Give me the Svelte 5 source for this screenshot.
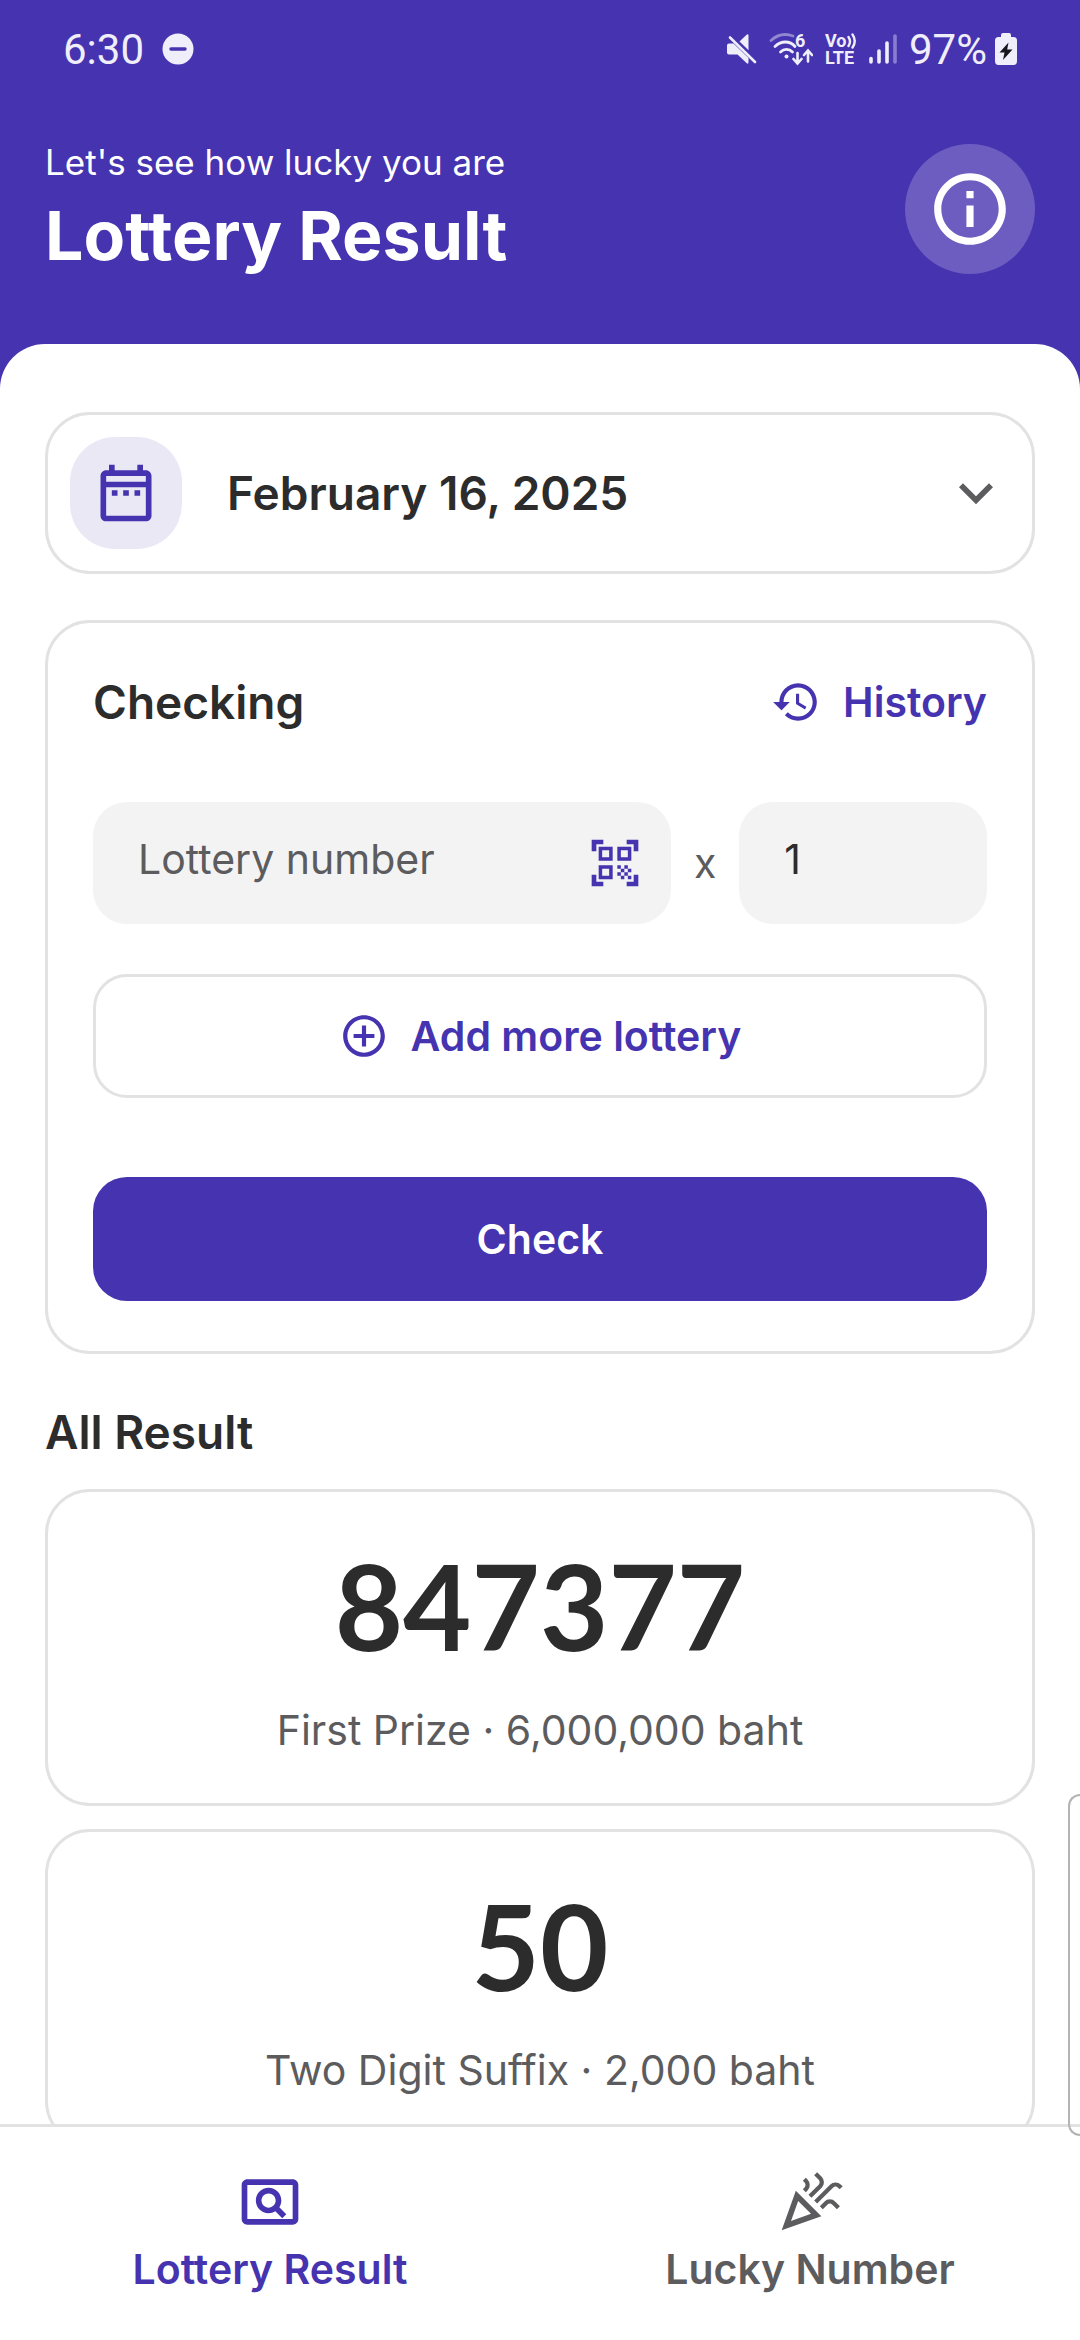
<script lang="ts">
	type Prize = { number: string, label: string, reward: string };
	type Tab = { id: string, label: string, icon: string };

	const icons: Record<string, string> =
	{
		info: "M11 7h2v2h-2zm0 4h2v6h-2zm1-9C6.48 2 2 6.48 2 12s4.48 10 10 10 10-4.48 10-10S17.52 2 12 2zm0 18c-4.41 0-8-3.59-8-8s3.59-8 8-8 8 3.59 8 8-3.59 8-8 8z",
		calendar: "M7 11h2v2H7v-2zm14-5v14c0 1.1-.9 2-2 2H5c-1.11 0-2-.9-2-2l.01-14c0-1.1.88-2 1.99-2h1V2h2v2h8V2h2v2h1c1.1 0 2 .9 2 2zM5 8h14V6H5v2zm14 12V10H5v10h14zm-4-7h2v-2h-2v2zm-4 0h2v-2h-2v2z",
		chevron: "M16.59 8.59 12 13.17 7.41 8.59 6 10l6 6 6-6z",
		history: "M13 3c-4.97 0-9 4.03-9 9H1l3.89 3.89.07.14L9 12H6c0-3.87 3.13-7 7-7s7 3.13 7 7-3.13 7-7 7c-1.93 0-3.68-.79-4.94-2.06l-1.42 1.42C8.27 19.99 10.51 21 13 21c4.97 0 9-4.03 9-9s-4.03-9-9-9zm-1 5v5l4.28 2.54.72-1.21-3.5-2.08V8H12z",
		scanner: "M9.5 6.5v3h-3v-3h3M11 5H5v6h6V5zm-1.5 9.5v3h-3v-3h3M11 13H5v6h6v-6zm6.5-6.5v3h-3v-3h3M19 5h-6v6h6V5zm-6 8h1.5v1.5H13V13zm1.5 1.5H16V16h-1.5v-1.5zM16 13h1.5v1.5H16V13zm-3 3h1.5v1.5H13V16zm1.5 1.5H16V19h-1.5v-1.5zM16 16h1.5v1.5H16V16zm1.5-1.5H19V16h-1.5v-1.5zm0 3H19V19h-1.5v-1.5zM22 7h-2V4h-3V2h5v5zm0 15v-5h-2v3h-3v2h5zM2 22h5v-2H4v-3H2v5zM2 2v5h2V4h3V2H2z",
		add: "M13 7h-2v4H7v2h4v4h2v-4h4v-2h-4V7zm-1-5C6.48 2 2 6.48 2 12s4.48 10 10 10 10-4.48 10-10S17.52 2 12 2zm0 18c-4.41 0-8-3.59-8-8s3.59-8 8-8 8 3.59 8 8-3.59 8-8 8z",
		pageview: "M11.49 16c.88 0 1.7-.26 2.39-.7l2.44 2.44 1.42-1.42-2.44-2.43c.44-.7.7-1.51.7-2.39C16 9.01 13.99 7 11.5 7S7 9.01 7 11.5 9.01 16 11.49 16zm.01-7C12.88 9 14 10.12 14 11.5S12.88 14 11.5 14 9 12.88 9 11.5 10.12 9 11.5 9zM20 4H4c-1.1 0-2 .9-2 2v12c0 1.1.9 2 2 2h16c1.1 0 2-.9 2-2V6c0-1.1-.9-2-2-2zm0 14H4V6h16v12z",
		celebration: "M2 22l14-5-9-9L2 22zm10.35-5.82L5.3 18.7l2.52-7.05 4.53 4.53zM14.53 12.53l5.59-5.59a1.25 1.25 0 0 1 1.77 0l.59.59 1.06-1.06-.59-.59a2.758 2.758 0 0 0-3.89 0l-5.59 5.59 1.06 1.06zM10.06 6.88l-.59.59 1.06 1.06.59-.59a2.758 2.758 0 0 0 0-3.89l-.59-.59-1.06 1.07.59.59c.48.48.48 1.28 0 1.76zM17.06 11.88l-1.59 1.59 1.06 1.06 1.59-1.59a1.25 1.25 0 0 1 1.77 0l1.61 1.61 1.06-1.06-1.61-1.61a2.758 2.758 0 0 0-3.9 0zM15.06 5.88l-3.59 3.59 1.06 1.06 3.59-3.59a2.758 2.758 0 0 0 0-3.89l-1.59-1.59-1.06 1.06 1.59 1.59c.48.49.48 1.29 0 1.77z"
	};

	const draws = ["February 16, 2025"];

	const prizes: Prize[] =
	[
		{ number: "847377", label: "First Prize", reward: "6,000,000 baht" },
		{ number: "50", label: "Two Digit Suffix", reward: "2,000 baht" }
	];

	const tabs: Tab[] =
	[
		{ id: "result", label: "Lottery Result", icon: "pageview" },
		{ id: "lucky", label: "Lucky Number", icon: "celebration" }
	];

	let draw = $state(draws[0]);
	let tickets = $state([{ number: "", amount: "1" }]);
	let activeTab = $state("result");

	function addTicket()
	{
		tickets.push({ number: "", amount: "1" });
	}
</script>

{#snippet icon(name: string, size: string)}
	<svg class="icon {size}" viewBox="0 0 24 24" aria-hidden="true"><path d={icons[name]} /></svg>
{/snippet}

<div class="app">
	<header>
		<div class="statusbar">
			<span>6:30</span>
			<svg class="dnd" width="32" height="32" viewBox="0 0 32 32" aria-hidden="true">
				<circle cx="16" cy="16" r="15.5" fill="currentColor" />
				<path d="M9 16h14" stroke="#4533b0" stroke-width="3.4" stroke-linecap="round" />
			</svg>
			<div class="system">
				<svg width="30" height="30" viewBox="0 0 30 30" aria-hidden="true">
					<path d="M12.5 7.5 19.6.8q1.9-1.4 1.9.8v14.6zM2 9.5h4.5L21.5 24v4q0 2.8-2 1L10.5 20.5H2q-2 0-2-2v-7q0-2 2-2z" fill="currentColor" />
					<path d="M3 3.5 28 28" stroke="currentColor" stroke-width="2.6" stroke-linecap="round" />
				</svg>
				<svg width="44" height="40" viewBox="0 -4 44 40" fill="none" stroke="currentColor" stroke-linecap="round" stroke-width="2.8" aria-hidden="true">
					<path d="M2 7.5C9 1 17 .5 24 3" opacity=".45" />
					<path d="M6 13.5c6-6 15-6 20 0M11.5 19c3.5-3.5 8.5-3.5 12 0" />
					<circle cx="17.5" cy="23.5" r="2" fill="currentColor" stroke="none" />
					<path d="M28.5 20v10m-4-4 4 4.5 4-4.5M39 28.5V18m-4 4 4-4.5 4 4.5" stroke-width="2.6" />
					<text x="26" y="14" class="glyph">6</text>
				</svg>
				<svg width="32" height="40" viewBox="0 -4 32 40" aria-hidden="true">
					<text x="0" y="14" class="glyph">Vo</text>
					<text x="0" y="31" class="glyph">LTE</text>
					<path d="M23.5 4q3 4.5 0 9M27.5 1.5q4.5 6.5 0 13" fill="none" stroke="currentColor" stroke-width="2.4" stroke-linecap="round" />
				</svg>
				<svg width="28" height="30" viewBox="0 0 28 30" stroke="currentColor" stroke-width="3.6" stroke-linecap="round" aria-hidden="true">
					<path d="M2 24.5V28M10 17v11M18 9v19" />
					<path d="M26 2v26" opacity=".4" />
				</svg>
				<div class="battery">
					<span>97%</span>
					<svg width="22" height="32" viewBox="0 0 22 32" aria-hidden="true">
						<path d="M6 4V2q0-2 2-2h6q2 0 2 2v2h2.5Q22 4 22 7.5V28q0 4-3.5 4h-15Q0 32 0 28V7.5Q0 4 3.5 4z" fill="currentColor" />
						<path d="M13.5 9.5 4.5 19.5h5L8 27l9.5-10.5h-5.300z" fill="#17161f" />
					</svg>
				</div>
			</div>
		</div>
		<div class="heading">
			<div>
				<p>Let's see how lucky you are</p>
				<h1>Lottery Result</h1>
			</div>
			<button class="info" aria-label="Info">{@render icon("info", "xl")}</button>
		</div>
	</header>

	<main>
		<div class="card date">
			<div class="tile">{@render icon("calendar", "lg")}</div>
			<select bind:value={draw} aria-label="Date">
				{#each draws as d}<option value={d}>{d}</option>{/each}
			</select>
			<span class="chevron">{@render icon("chevron", "lg")}</span>
		</div>

		<section class="card checking">
			<div class="title">
				<h2>Checking</h2>
				<button class="history">{@render icon("history", "sm")}History</button>
			</div>
			{#each tickets as ticket}
				<div class="ticket">
					<div class="field">
						<input bind:value={ticket.number} placeholder="Lottery number" aria-label="Lottery number" inputmode="numeric" />
						<button class="scan" aria-label="Scan">{@render icon("scanner", "md")}</button>
					</div>
					<span class="times">x</span>
					<div class="field">
						<input bind:value={ticket.amount} aria-label="Amount" inputmode="numeric" />
					</div>
				</div>
			{/each}
			<button class="wide outline" onclick={addTicket}>{@render icon("add", "sm")}Add more lottery</button>
			<button class="wide check">Check</button>
		</section>

		<h2 class="all">All Result</h2>
		<div class="prizes">
			{#each prizes as prize}
				<article class="card prize">
					<strong>{prize.number}</strong>
					<p>{prize.label} · {prize.reward}</p>
				</article>
			{/each}
		</div>
	</main>

	<nav>
		{#each tabs as tab}
			<button class:active={activeTab === tab.id} onclick={() => activeTab = tab.id}>
				{@render icon(tab.icon, "lg")}
				{tab.label}
			</button>
		{/each}
	</nav>
	<div class="edge"></div>
</div>

<style>
	.app
	{
		--primary: #4533b0;
		--ink: #2c2c2c;
		--muted: #5c5c5e;
		--line: #e2e2e2;
		position: relative;
		display: flex;
		flex-direction: column;
		height: 100vh;
		overflow: hidden;
		background: var(--primary);
		color: var(--ink);
		font-family: Inter, "Open Sans", sans-serif;
		font-size: 41px;
	}

	h1, h2, p
	{
		margin: 0;
	}

	button, input, select
	{
		font: inherit;
		color: inherit;
		border: none;
		background: none;
		padding: 0;
		margin: 0;
		outline: none;
	}

	button
	{
		display: flex;
		align-items: center;
		justify-content: center;
		cursor: pointer;
	}

	svg
	{
		display: block;
		flex: none;
	}

	.icon
	{
		fill: currentColor;
	}

	.sm
	{
		width: 50px;
		height: 50px;
	}

	.md
	{
		width: 56px;
		height: 56px;
	}

	.lg
	{
		width: 68px;
		height: 68px;
	}

	.xl
	{
		width: 86px;
		height: 86px;
	}

	.statusbar
	{
		display: flex;
		align-items: center;
		height: 98px;
		padding: 0 63px;
		color: #f0eefb;
		font-family: Roboto, sans-serif;
		font-size: 42px;
	}

	.dnd
	{
		margin-left: 18px;
	}

	.system
	{
		display: flex;
		align-items: center;
		gap: 12px;
		margin-left: auto;
	}

	.battery
	{
		display: flex;
		align-items: center;
		gap: 8px;
	}

	.glyph
	{
		font-size: 18px;
		font-weight: bold;
		fill: currentColor;
		stroke: none;
	}

	.heading
	{
		display: flex;
		align-items: center;
		justify-content: space-between;
		padding: 38px 45px 62px;
		color: white;
	}

	.heading p
	{
		font-size: 35px;
		line-height: 52px;
	}

	h1
	{
		font-size: 68px;
		line-height: 94px;
	}

	.info
	{
		width: 130px;
		height: 130px;
		border-radius: 50%;
		background: #6d5dc1;
	}

	main
	{
		flex: 1;
		min-height: 0;
		overflow-y: auto;
		scrollbar-width: none;
		padding: 68px 45px 0;
		border-radius: 45px 45px 0 0;
		background: white;
	}

	.card
	{
		border: solid 3px var(--line);
		border-radius: 45px;
	}

	.date
	{
		display: flex;
		align-items: center;
		padding: 22px;
		margin-bottom: 46px;
	}

	.tile
	{
		padding: 22px;
		border-radius: 45px;
		background: #ebe8f6;
		color: var(--primary);
	}

	select
	{
		flex: 1;
		appearance: none;
		margin-left: 45px;
		height: 68px;
		font-size: 46px;
		font-weight: 600;
	}

	.chevron
	{
		color: var(--muted);
	}

	.checking
	{
		padding: 45px 45px 50px;
	}

	.title
	{
		display: flex;
		align-items: center;
		justify-content: space-between;
		margin-bottom: 66px;
	}

	h2
	{
		font-size: 46px;
		line-height: 68px;
		font-weight: 600;
	}

	.history
	{
		gap: 22px;
		color: var(--primary);
		font-weight: 600;
	}

	.ticket
	{
		display: grid;
		grid-template-columns: minmax(0, 7fr) auto minmax(0, 3fr);
		align-items: center;
		gap: 23px;
		margin-bottom: 50px;
	}

	.field
	{
		display: flex;
		align-items: center;
		height: 122px;
		padding: 0 28px 0 45px;
		border-radius: 34px;
		background: #f3f3f3;
		box-sizing: border-box;
	}

	.field input
	{
		flex: 1;
		min-width: 0;
		width: 100%;
		padding-bottom: 8px;
	}

	.field input::placeholder
	{
		color: var(--muted);
		opacity: 1;
	}

	.scan
	{
		color: var(--primary);
	}

	.times
	{
		color: var(--muted);
	}

	.wide
	{
		width: 100%;
		height: 124px;
		gap: 22px;
		border-radius: 34px;
		font-weight: 600;
	}

	.outline
	{
		border: solid 3px var(--line);
		color: var(--primary);
	}

	.check
	{
		margin-top: 79px;
		background: var(--primary);
		color: white;
	}

	.all
	{
		margin: 44px 0 23px;
	}

	.prizes
	{
		display: flex;
		flex-direction: column;
		gap: 23px;
	}

	.prize
	{
		padding: 42px 42px 43px;
		text-align: center;
	}

	.prize strong
	{
		display: block;
		font-family: Lato, sans-serif;
		font-size: 118px;
		line-height: 144px;
	}

	.prize p
	{
		margin-top: 22px;
		line-height: 60px;
		color: var(--muted);
	}

	nav
	{
		display: flex;
		border-top: solid 3px var(--line);
		background: white;
	}

	nav button
	{
		flex: 1;
		flex-direction: column;
		padding: 41px 0 38px;
		line-height: 66px;
		color: var(--muted);
		font-weight: 600;
	}

	nav .active
	{
		color: var(--primary);
	}

	/* handle of the system edge panel */
	.edge
	{
		position: absolute;
		right: 0;
		bottom: 204px;
		width: 12px;
		height: 342px;
		border: solid 2px #b4b4b6;
		border-right: none;
		border-radius: 14px 0 0 14px;
		box-sizing: border-box;
	}
</style>
